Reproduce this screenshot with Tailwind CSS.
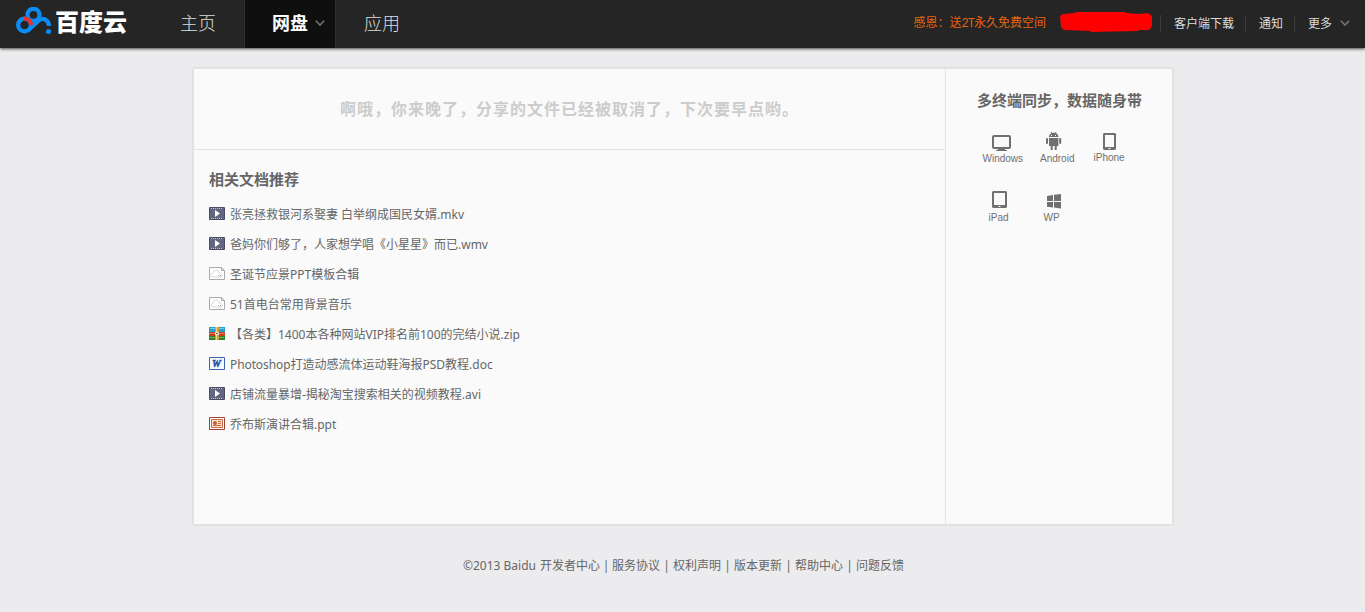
<!DOCTYPE html>
<html lang="zh-CN">
<head>
  <meta charset="UTF-8">
  <meta name="viewport" content="width=device-width, initial-scale=1.0">
  <title>百度云 网盘</title>
  <script src="https://cdn.jsdelivr.net/npm/@tailwindcss/browser@4"></script>
</head>
<body class="h-[612px] overflow-hidden bg-[#ececee] font-['Noto_Sans','Noto_Sans_CJK_SC',sans-serif] text-xs text-[#666]">
  <header class="flex h-12 justify-between bg-[#252525] shadow-[0_1px_3px_rgba(0,0,0,0.7)]">
    <div class="flex">
      <a href="#" class="flex w-[152px] pl-4">
        <svg viewBox="0 0 36 28" class="mt-[7px] h-7 w-9 shrink-0" fill="none" stroke-width="4.200">
          <circle cx="17.500" cy="7.800" r="6" stroke="#0c8cf5" />
          <circle cx="8.500" cy="18" r="6.400" stroke="#0c8cf5" />
          <path d="M12.500 23L22.500 13.800c4.500-4 10.500-.8 10.500 5.200" stroke="#0c8cf5" />
          <path d="M7.500 11.600c4-.6 7 1.800 7.700 6.400" stroke="#e6322b" />
          <circle cx="32.500" cy="24.500" r="2.500" fill="#0c8cf5" />
        </svg>
        <span class="ml-[3px] h-12 text-2xl leading-[43px] font-black whitespace-nowrap text-white">百度云</span>
      </a>
      <nav class="flex text-lg leading-[46px] text-[#ddd]">
        <a href="#" class="w-[93px] border-r border-[#2e2e2e] pl-7 font-light">主页</a>
        <a href="#" class="flex w-[91px] items-center border-r border-[#2e2e2e] bg-[#0f0f0f] pl-[27px] font-bold text-white">
          <span class="h-12">网盘</span>
          <svg viewBox="0 0 10 6" class="mb-0.5 ml-[7px] h-1.5 w-2.5" fill="none" stroke="#777" stroke-width="1.500"><path d="M.8.8L5 5L9.200.8" /></svg>
        </a>
        <a href="#" class="pl-7 font-light">应用</a>
      </nav>
    </div>
    <div class="flex items-center pr-[15px] pb-0.5 text-[#ddd]">
      <a href="#" class="mr-3.5 pt-px text-[#e8640c]">感恩：送<span class="font-['Liberation_Mono'] tracking-[-1px]">2T</span>永久免费空间</a>
      <svg viewBox="0 0 92 20" class="mb-0.5 h-5 w-[92px]" fill="#f00"><path d="M0 4L3 2L15 1L16 0H65L66 1L79 2L88 1L92 4V14L89 18H79L78 19L31 20L30 19L4 18L1 15Z" /></svg>
      <a href="#" class="ml-2 border-l border-[#3b3b3b] pt-px pl-[13px]">客户端下载</a>
      <a href="#" class="ml-[11px] border-l border-[#3b3b3b] pt-px pl-[13px]">通知</a>
      <a href="#" class="ml-[11px] flex items-center border-l border-[#3b3b3b] pt-px pl-[13px]">更多
        <svg viewBox="0 0 10 6" class="mb-0.5 ml-2 h-1.5 w-2.5" fill="none" stroke="#777" stroke-width="1.500"><path d="M.8.8L5 5L9.200.8" /></svg>
      </a>
    </div>
  </header>

  <main class="mt-5 ml-[193px] flex h-[457px] w-[980px] border border-[#e2e2e2] bg-[#fafafa] shadow-[0_0_2px_rgba(0,0,0,0.12)]">
    <section class="w-[752px] border-r border-[#e4e4e4]">
      <h1 class="h-[81px] border-b border-[#e4e4e4] pl-[146px] text-base leading-[80px] font-bold tracking-[1px] text-[#ccc]">啊哦，你来晚了，分享的文件已经被取消了，下次要早点哟。</h1>
      <div class="pt-[18px] pl-[15px]">
        <h2 class="mb-2 text-[15px] leading-[22px] font-bold">相关文档推荐</h2>
        <ul class="leading-[30px]">
          <li class="flex h-[30px] items-center gap-[5px]">
            <svg viewBox="0 0 16 13" class="h-[13px] w-4"><path fill="#626681" stroke="#4b4c62" d="M.5.500h15v12H.5z" /><path stroke="#c2c3cf" stroke-dasharray="1 1" d="M2 1.500h12M2 11.500h12" /><path fill="#fff" d="M6 3v7l5-3.500z" /></svg>
            <a href="#" class="pt-1">张亮拯救银河系娶妻 白举纲成国民女婿.mkv</a>
          </li>
          <li class="flex h-[30px] items-center gap-[5px]">
            <svg viewBox="0 0 16 13" class="h-[13px] w-4"><path fill="#626681" stroke="#4b4c62" d="M.5.500h15v12H.5z" /><path stroke="#c2c3cf" stroke-dasharray="1 1" d="M2 1.500h12M2 11.500h12" /><path fill="#fff" d="M6 3v7l5-3.500z" /></svg>
            <a href="#" class="pt-1">爸妈你们够了，人家想学唱《小星星》而已.wmv</a>
          </li>
          <li class="flex h-[30px] items-center gap-[5px]">
            <svg viewBox="0 0 16 13" class="h-[13px] w-4"><path fill="#fff" stroke="#aaa" d="M.5.500h12l3 3v9H.5zM12.500.500v3h3" /><path fill="none" stroke="#ccc" stroke-width=".8" d="M12 10H4c-3 0-2.500-3.500 0-3.500 0-4 5.500-4.500 6-.5 3.500-.5 4 4 1.500 4" /><path fill="#f88" d="M9 8h1v1H9z" /><path fill="#7af" d="M11 8h1v1h-1z" /></svg>
            <a href="#" class="pt-1">圣诞节应景PPT模板合辑</a>
          </li>
          <li class="flex h-[30px] items-center gap-[5px]">
            <svg viewBox="0 0 16 13" class="h-[13px] w-4"><path fill="#fff" stroke="#aaa" d="M.5.500h12l3 3v9H.5zM12.500.500v3h3" /><path fill="none" stroke="#ccc" stroke-width=".8" d="M12 10H4c-3 0-2.500-3.500 0-3.500 0-4 5.500-4.500 6-.5 3.500-.5 4 4 1.500 4" /><path fill="#f88" d="M9 8h1v1H9z" /><path fill="#7af" d="M11 8h1v1h-1z" /></svg>
            <a href="#" class="pt-1">51首电台常用背景音乐</a>
          </li>
          <li class="flex h-[30px] items-center gap-[5px]">
            <svg viewBox="0 0 16 13" class="h-[13px] w-4"><path fill="#2b9bd0" d="M0 0h16v5H0z" /><path fill="#70cbed" d="M1 1h14v1H1z" /><path fill="#c63e20" d="M0 5h16v4H0z" /><path fill="#ef7847" d="M0 6h16v1H0z" /><path fill="#2f7e35" d="M0 9h16v4H0z" /><path fill="#74b944" d="M1 10h14v1H1z" /><path fill="#d49a35" d="M6 0h4v13H6z" /><path fill="#f9d57b" d="M7 0h1v13H7z" /><path fill="#555" stroke="#eee" d="M6.500 5.500h3v2h-3z" /></svg>
            <a href="#" class="pt-1">【各类】1400本各种网站VIP排名前100的完结小说.zip</a>
          </li>
          <li class="flex h-[30px] items-center gap-[5px]">
            <svg viewBox="0 0 16 13" class="h-[13px] w-4"><path fill="#f5f9ff" stroke="#3b64ad" d="M.5.500h15v12H.5z" /><text x="3" y="10" font-family="Liberation Serif" font-size="10" font-weight="bold" font-style="italic" fill="#2450a4" stroke="#2450a4" stroke-width=".5">W</text></svg>
            <a href="#" class="pt-1"><span class="tracking-[-0.1px]">Photoshop</span>打造动感流体运动鞋海报PSD教程.doc</a>
          </li>
          <li class="flex h-[30px] items-center gap-[5px]">
            <svg viewBox="0 0 16 13" class="h-[13px] w-4"><path fill="#626681" stroke="#4b4c62" d="M.5.500h15v12H.5z" /><path stroke="#c2c3cf" stroke-dasharray="1 1" d="M2 1.500h12M2 11.500h12" /><path fill="#fff" d="M6 3v7l5-3.500z" /></svg>
            <a href="#" class="pt-1">店铺流量暴增-揭秘淘宝搜索相关的视频教程.avi</a>
          </li>
          <li class="flex h-[30px] items-center gap-[5px]">
            <svg viewBox="0 0 16 13" class="h-[13px] w-4"><path fill="#fff" stroke="#a14032" d="M.5.500h15v12H.5z" /><path fill="#fbe3cf" stroke="#c8693e" d="M2.500 2.500h11v8h-11z" /><circle cx="6" cy="6" r="2" fill="#c65a34" /><path fill="none" stroke="#c8693e" d="M9 4.500h3M9 6.500h3M4 8.500h8" /></svg>
            <a href="#" class="pt-1">乔布斯演讲合辑.ppt</a>
          </li>
        </ul>
      </div>
    </section>
    <aside class="pt-5 pl-[31px]">
      <h2 class="text-[15px] leading-[22px] font-bold">多终端同步，数据随身带</h2>
      <svg viewBox="977 125 165 105" class="mt-3.5 h-[105px] w-[165px]" fill="#707070" font-family="Liberation Sans" font-size="10">
        <rect x="993" y="136" width="17" height="12" rx="1" fill="none" stroke="#707070" stroke-width="2" />
        <path d="M998 149h7v1h2v1h-11v-1h2z" />
        <text x="982.500" y="162">Windows</text>
        <path d="M1049 137c0-2 1-3 2.500-3.700l-.8-1.300h1l.8 1c1-.3 1.500-.3 2.400 0l.8-1h1l-.8 1.300c1.500.7 2.500 1.700 2.500 3.700z" />
        <path d="M1049 138h9.400v8h-1.700v4h-2v-4h-2v4h-2v-4H1049z" />
        <rect x="1046" y="138" width="2" height="6" rx="1" /><rect x="1059.200" y="138" width="2" height="6" rx="1" />
        <path fill="#fafafa" d="M1051 135h1v1h-1zM1055 135h1v1h-1z" />
        <text x="1040" y="162">Android</text>
        <path fill-rule="evenodd" d="M1104 133h11l1 1v15l-1 1h-11l-1-1v-15zM1105 135v12h9v-12zM1108.500 148v1h2v-1z" />
        <text x="1093.500" y="161">iPhone</text>
        <path fill-rule="evenodd" d="M993 191h13l1 1v15l-1 1h-13l-1-1v-15zM994 193v12h11v-12zM998.500 206v1h2v-1z" />
        <text x="988.500" y="221">iPad</text>
        <path d="M1047 196l6-1v6h-6zM1054 194.800l7-.8v7h-7zM1047 202h6v5.500l-6-.8zM1054 202h7v6.500l-7-.9z" />
        <text x="1043.500" y="221">WP</text>
      </svg>
    </aside>
  </main>

  <footer class="mt-8 flex justify-center pl-0.5 leading-[18px]">
    <span class="mr-1">©2013 Baidu</span>
    <a href="#">开发者中心</a><span class="w-3 text-center">|</span>
    <a href="#">服务协议</a><span class="w-[13px] text-center">|</span>
    <a href="#">权利声明</a><span class="w-[13px] text-center">|</span>
    <a href="#">版本更新</a><span class="w-[13px] text-center">|</span>
    <a href="#">帮助中心</a><span class="w-[13px] text-center">|</span>
    <a href="#">问题反馈</a>
  </footer>
</body>
</html>
